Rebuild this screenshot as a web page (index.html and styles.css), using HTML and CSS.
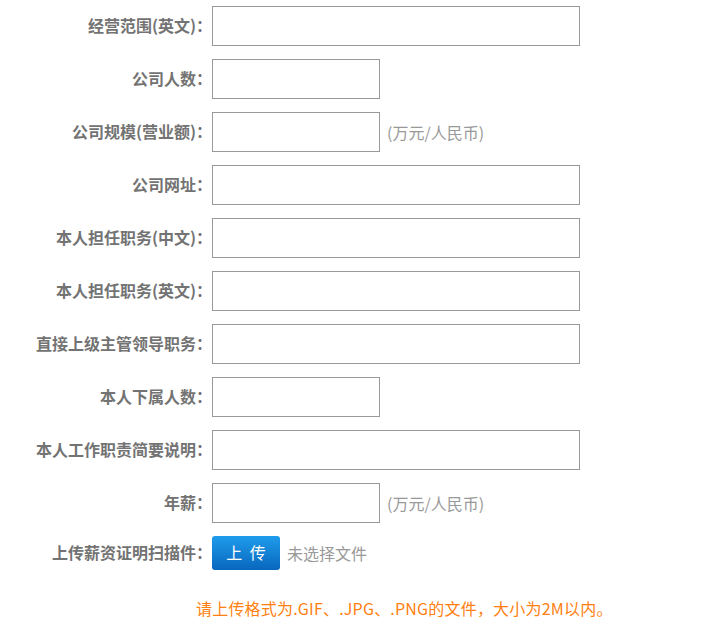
FILE: index.html
```html
<!DOCTYPE html>
<html lang="zh-CN">
<head>
    <meta charset="UTF-8">
    <meta name="viewport" content="width=device-width, initial-scale=1.0">
    <title>个人资料</title>
    <link rel="stylesheet" href="styles.css">
</head>
<body>
    <form class="info-form">
        <div class="row">
            <label>经营范围(英文)：</label>
            <input type="text" class="long">
        </div>
        <div class="row">
            <label>公司人数：</label>
            <input type="text" class="short">
        </div>
        <div class="row">
            <label>公司规模(营业额)：</label>
            <input type="text" class="short">
            <span class="unit">(万元/人民币)</span>
        </div>
        <div class="row">
            <label>公司网址：</label>
            <input type="text" class="long">
        </div>
        <div class="row">
            <label>本人担任职务(中文)：</label>
            <input type="text" class="long">
        </div>
        <div class="row">
            <label>本人担任职务(英文)：</label>
            <input type="text" class="long">
        </div>
        <div class="row">
            <label>直接上级主管领导职务：</label>
            <input type="text" class="long">
        </div>
        <div class="row">
            <label>本人下属人数：</label>
            <input type="text" class="short">
        </div>
        <div class="row">
            <label>本人工作职责简要说明：</label>
            <input type="text" class="long">
        </div>
        <div class="row">
            <label>年薪：</label>
            <input type="text" class="short">
            <span class="unit">(万元/人民币)</span>
        </div>
        <div class="row upload-row">
            <label>上传薪资证明扫描件：</label>
            <button type="button" class="upload">上 传</button>
            <span class="file-name">未选择文件</span>
        </div>
        <p class="hint">请上传格式为.GIF、.JPG、.PNG的文件，大小为2M以内。</p>
    </form>
</body>
</html>
```

FILE: styles.css
```css
body {
    margin: 0;
    background-color: #fff;
    font-family: "Noto Sans CJK SC", "Noto Sans", sans-serif;
}
.info-form {
    padding-top: 6px;
}
.row {
    display: flex;
    align-items: center;
    height: 40px;
    margin-bottom: 13px;
}
.row label {
    width: 212px;
    text-align: right;
    font-size: 16px;
    font-weight: bold;
    color: #737373;
    padding-bottom: 3px;
}
.row input {
    box-sizing: border-box;
    height: 40px;
    border: 1px solid #999;
    margin: 0;
    padding: 0 6px;
}
.row input.long {
    width: 368px;
}
.row input.short {
    width: 168px;
}
.unit,
.file-name {
    font-size: 16px;
    color: #999;
    margin-left: 7px;
}
.upload-row {
    height: 34px;
    margin-bottom: 0;
}
.upload {
    width: 68px;
    height: 34px;
    border: none;
    border-radius: 3px;
    background: linear-gradient(#1f9cec, #0867bd);
    color: #fff;
    font-size: 16px;
    font-family: "Noto Sans CJK SC", sans-serif;
    letter-spacing: 2px;
    padding: 0 0 3px 2px;
    cursor: pointer;
}
.hint {
    margin: 26px 0 0 196px;
    font-size: 16px;
    line-height: 24px;
    letter-spacing: 0.2px;
    color: #ff7f11;
}
```
